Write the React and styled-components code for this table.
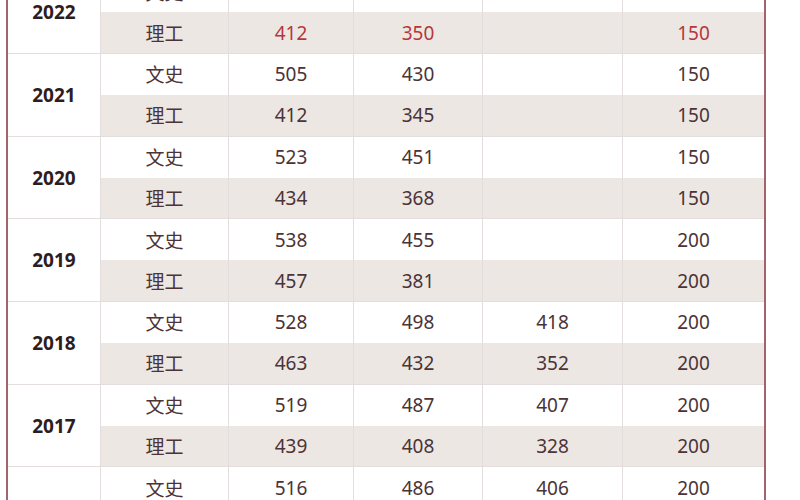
import styled, { createGlobalStyle } from "styled-components";

const GlobalStyle = createGlobalStyle`
  body {
    margin: 0;
    background: #fff;
    overflow: hidden;
    font-family: "Noto Sans", "Noto Sans CJK SC", sans-serif;
  }
`;

const Sheet = styled.div`
  margin-top: -28.7px;
  margin-left: 6px;
  width: 760px;
  border-left: 2px solid #a3636a;
  border-right: 2px solid #a3636a;
  box-sizing: border-box;
`;

const Group = styled.div`
  display: grid;
  grid-template-columns: 92px 128px 125px 129px 140px 142px;
  grid-template-rows: 1fr 1fr;
  height: 82.7px;
  box-sizing: border-box;
  border-bottom: 1px solid #e3dedd;
`;

const Year = styled.div`
  grid-row: span 2;
  display: flex;
  align-items: center;
  justify-content: center;
  font-size: 19px;
  font-weight: 700;
  color: #2e1c20;
  background: #fff;
`;

const Cell = styled.div`
  display: flex;
  align-items: center;
  justify-content: center;
  border-left: 1px solid #e3dedd;
  font-size: 19px;
  background: ${(p) => (p.$shade ? "#ede7e4" : "#fff")};
  color: ${(p) => (p.$hot ? "#b5373c" : "#4b3336")};
`;

const years = [
  { year: "2022", hot: true, rows: [["文史", "466", "405", "", "150"], ["理工", "412", "350", "", "150"]] },
  { year: "2021", rows: [["文史", "505", "430", "", "150"], ["理工", "412", "345", "", "150"]] },
  { year: "2020", rows: [["文史", "523", "451", "", "150"], ["理工", "434", "368", "", "150"]] },
  { year: "2019", rows: [["文史", "538", "455", "", "200"], ["理工", "457", "381", "", "200"]] },
  { year: "2018", rows: [["文史", "528", "498", "418", "200"], ["理工", "463", "432", "352", "200"]] },
  { year: "2017", rows: [["文史", "519", "487", "407", "200"], ["理工", "439", "408", "328", "200"]] },
  { year: "2016", rows: [["文史", "516", "486", "406", "200"], ["理工", "437", "406", "326", "200"]] },
];

const App = () => {
  return (
    <>
      <GlobalStyle />
      <Sheet>
        {years.map((g) => (
          <Group key={g.year}>
            <Year>{g.year}</Year>
            {g.rows.map((row, r) =>
              row.map((v, i) => (
                <Cell key={r + "-" + i} $shade={r === 1} $hot={g.hot && i > 0}>
                  {v}
                </Cell>
              ))
            )}
          </Group>
        ))}
      </Sheet>
    </>
  );
};

export default App;
